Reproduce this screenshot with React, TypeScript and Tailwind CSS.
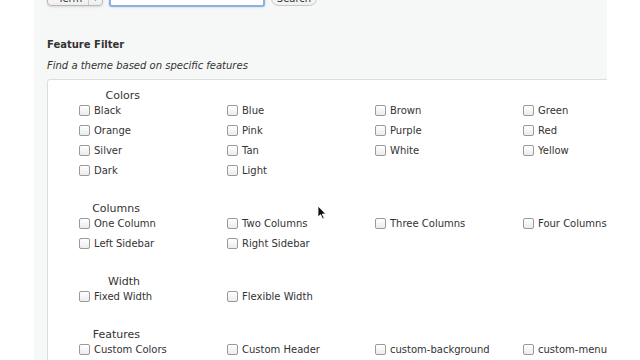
import React from "react";

const groups: { title: string; items: string[] }[] = [
  {
    title: "Colors",
    items: ["Black", "Blue", "Brown", "Green", "Orange", "Pink", "Purple", "Red", "Silver", "Tan", "White", "Yellow", "Dark", "Light"],
  },
  { title: "Columns", items: ["One Column", "Two Columns", "Three Columns", "Four Columns", "Left Sidebar", "Right Sidebar"] },
  { title: "Width", items: ["Fixed Width", "Flexible Width"] },
  { title: "Features", items: ["Custom Colors", "Custom Header", "custom-background", "custom-menu"] },
];

function Check({ label }: { label: string }) {
  return (
    <label className="flex h-[20px] items-center gap-[4px] whitespace-nowrap">
      <span className="h-[11px] w-[11px] shrink-0 rounded-[2px] border border-[#9a9a9a] bg-gradient-to-b from-white to-[#ececec]" />
      <span>{label}</span>
    </label>
  );
}

export default function App() {
  return (
    <div
      className="relative flex h-[360px] w-[640px] overflow-hidden bg-white text-[#333]"
      style={{ fontFamily: '"DejaVu Sans", Verdana, sans-serif' }}
    >
      <div className="w-[34px] shrink-0 bg-white" />
      <div className="w-[573px] shrink-0 overflow-hidden bg-[#f6f7f7] pl-[13px]">
        <div className="-mt-[9px] flex items-start gap-[6px] text-[10px]">
          <div className="flex h-[15px] w-[56px] items-center rounded-[4px] border border-[#b8b8b8] bg-gradient-to-b from-white to-[#eee] leading-[10px] shadow-sm">
            <span className="flex-1 pl-[10px]">Term</span>
            <span className="flex h-full w-[14px] items-center justify-center border-l border-[#ccc] text-[8px]">▾</span>
          </div>
          <div className="h-[16px] w-[156px] rounded-[3px] border-2 border-[#8fb2dd] bg-white shadow-[0_0_2px_#9dc0eb]" />
          <div className="flex h-[15px] w-[46px] items-center justify-center rounded-full border border-[#c8c8c8] bg-gradient-to-b from-white to-[#f0f0f0] leading-[10px]">
            Search
          </div>
        </div>
        <h3 className="mt-[31px] text-[10px] font-bold leading-[13px]">Feature Filter</h3>
        <p className="mt-[8px] text-[10px] italic leading-[13px]">Find a theme based on specific features</p>
        <div className="mt-[7px] w-[640px] rounded-[3px] border border-[#dcdcdc] bg-white pt-[10px] text-[10px]">
          {groups.map((g) => (
            <div key={g.title} className="mb-[23px]">
              <div className="relative top-[1px] w-[92px] text-right text-[11px] leading-[10px]">{g.title}</div>
              <div className="grid grid-cols-[148px_148px_148px_148px] pl-[31px]">
                {g.items.map((i) => (
                  <Check key={i} label={i} />
                ))}
              </div>
            </div>
          ))}
        </div>
      </div>
      <div className="flex-1 bg-white" />
      <svg className="absolute left-[317px] top-[205px]" width="10" height="15" viewBox="0 0 10 15">
        <path d="M1 1 L1 12 L3.6 9.6 L5.6 14 L7.2 13.3 L5.3 9 L8.8 9 Z" fill="#111" stroke="#fff" strokeWidth="0.8" />
      </svg>
    </div>
  );
}
